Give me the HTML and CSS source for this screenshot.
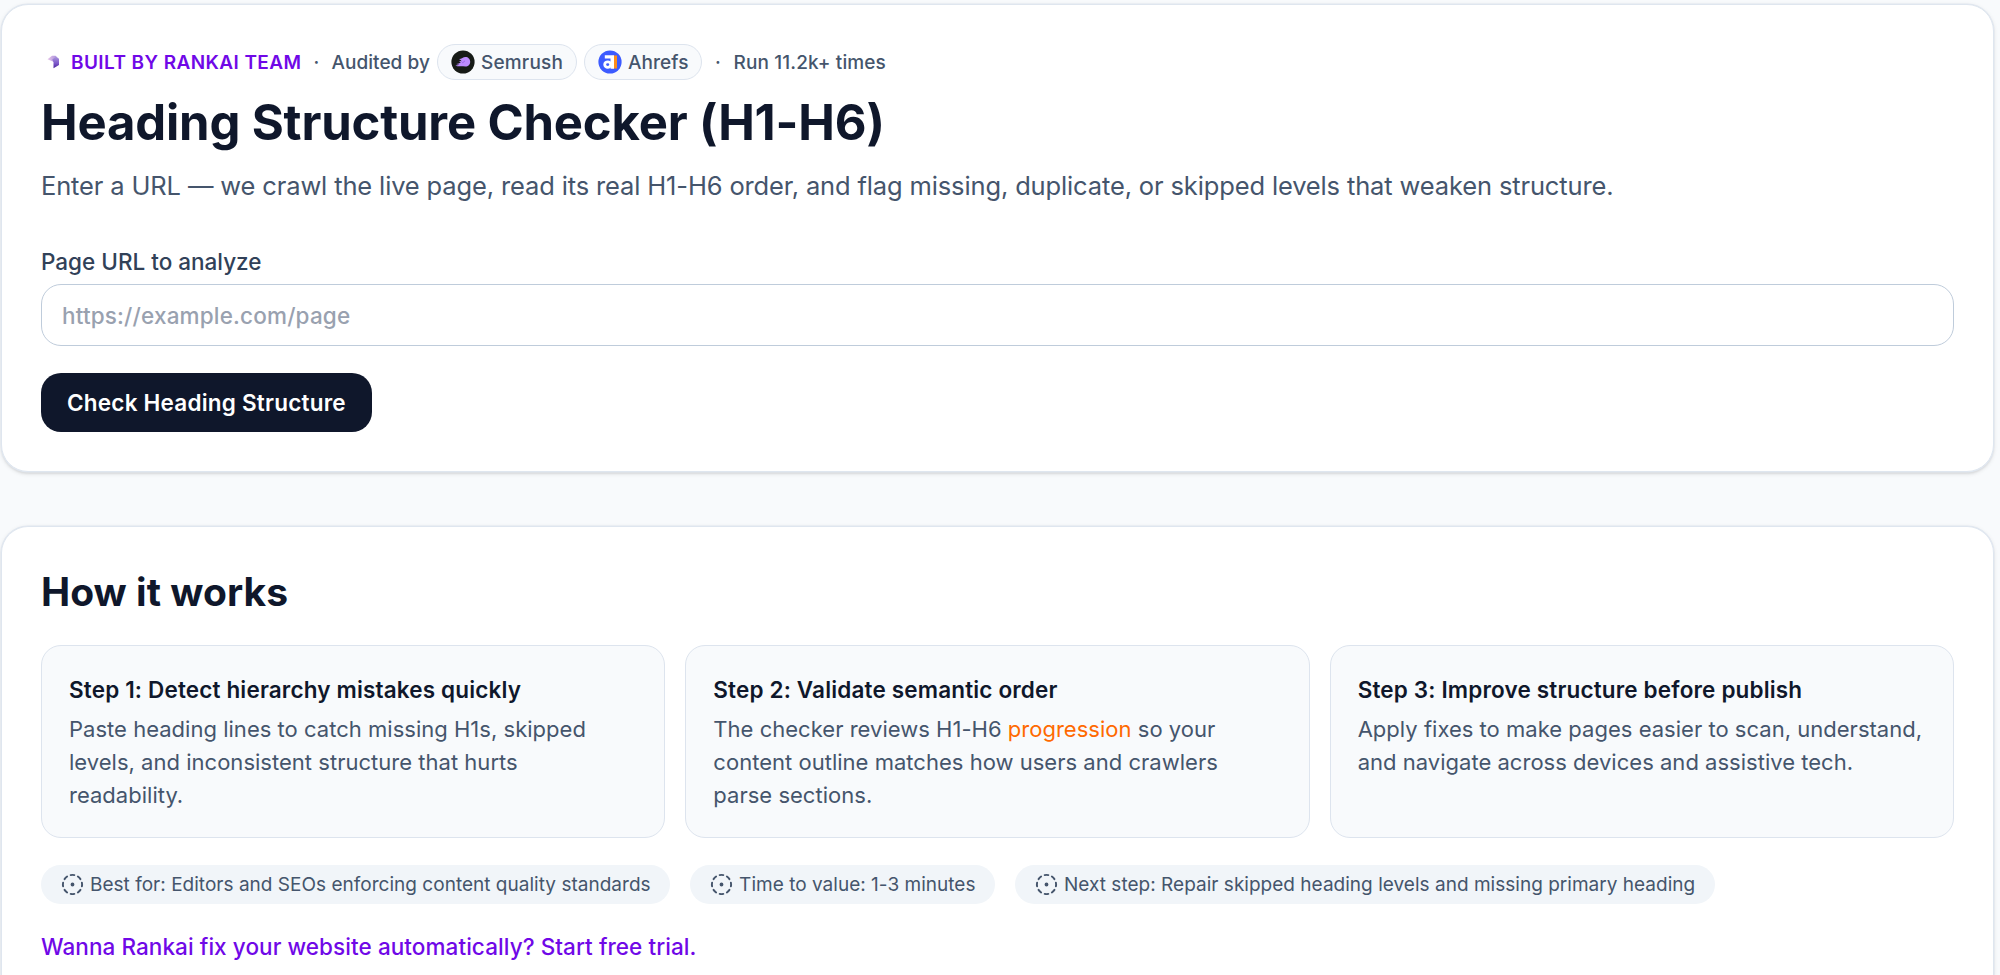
FILE: index.html
```
<!DOCTYPE html>
<html lang="en">
<head>
    <meta charset="UTF-8">
    <meta name="viewport" content="width=device-width, initial-scale=1.0">
    <title>Heading Structure Checker (H1-H6)</title>
    <link rel="stylesheet" href="styles.css">
</head>
<body>
    <svg class="sprite" width="0" height="0">
        <symbol id="circle-dashed" viewBox="0 0 24 24">
            <path d="M10.1 2.18a9.93 9.93 0 0 1 3.8 0"/>
            <path d="M17.6 3.71a9.95 9.95 0 0 1 2.69 2.7"/>
            <path d="M21.82 10.1a9.93 9.93 0 0 1 0 3.8"/>
            <path d="M20.29 17.6a9.95 9.95 0 0 1-2.7 2.69"/>
            <path d="M13.9 21.82a9.94 9.94 0 0 1-3.8 0"/>
            <path d="M6.4 20.29a9.95 9.95 0 0 1-2.69-2.7"/>
            <path d="M2.18 13.9a9.93 9.93 0 0 1 0-3.8"/>
            <path d="M3.71 6.4a9.95 9.95 0 0 1 2.7-2.69"/>
            <circle cx="12" cy="12" r="1"/>
        </symbol>
    </svg>

    <main class="page">
        <section class="card tool">
            <div class="meta">
                <span class="built">
                    <svg class="logo" viewBox="0 0 24 24">
                        <defs>
                            <linearGradient id="logoTop" x1="0" y1="0" x2="1" y2="0">
                                <stop offset="0" stop-color="#e6c4ea"/>
                                <stop offset="1" stop-color="#9d86d8"/>
                            </linearGradient>
                            <linearGradient id="logoSide" x1="0" y1="0" x2="0" y2="1">
                                <stop offset="0" stop-color="#a893dc"/>
                                <stop offset="0.6" stop-color="#7a55c8"/>
                                <stop offset="1" stop-color="#4a2599"/>
                            </linearGradient>
                        </defs>
                        <path fill="url(#logoTop)" d="M5.500 9.200 10 5.800h3.500l3.500 3.200-5 3z"/>
                        <path fill="url(#logoSide)" d="M10.300 9.500 13.500 7l3.500 2v6l-5.500 3.200v-6z"/>
                    </svg>
                    Built by Rankai team
                </span>
                <span class="dot">·</span>
                <span class="audited">Audited by</span>
                <span class="badge">
                    <svg viewBox="0 0 24 24">
                        <circle cx="12" cy="12" r="11.600" fill="#171b17"/>
                        <path fill="#be8cff" d="M19.200 11.700c0 2.700-2 4.800-4.800 4.800-2 0-3.600-.3-5.200-.2-1.800.1-3.300-.1-4.900-.8 1.600-.1 3-.3 4.200-.8-1.200 0-2.300-.1-3.300-.6 1.900-.3 3.300-.9 4.500-1.900-.7-.6-1.300-.9-2.100-1.300 1.200 0 2.200.1 3.100.4-.7-.9-1.600-1.600-2.700-2.200 2.400.2 4.200-2.200 6.400-2.200 2.800 0 4.800 2.100 4.800 4.800z"/>
                        <path d="M11.200 12.800c1.200-.5 2-1.100 2.700-1.900" stroke="#9a63ea" fill="none"/>
                    </svg>
                    Semrush
                </span>
                <span class="badge badge-ahrefs">
                    <svg viewBox="0 0 24 24">
                        <circle cx="12" cy="12" r="11.600" fill="#3c5bff"/>
                        <path d="M14.500 5.500h4.500v13h-4.500z" fill="#ff8c1a"/>
                        <path d="M6.800 5.300h9.200v13.400h-3.500V8.400H6.800z" fill="#fff"/>
                        <ellipse cx="9.700" cy="14.600" rx="3" ry="2.800" fill="none" stroke="#fff" stroke-width="2.800"/>
                    </svg>
                    Ahrefs
                </span>
                <span class="dot dot-last">·</span>
                <span class="runs">Run 11.2k+ times</span>
            </div>

            <h1>Heading Structure Checker (H1-H6)</h1>
            <p class="lead">Enter a URL — we crawl the live page, read its real H1-H6 order, and flag missing, duplicate, or skipped levels that weaken structure.</p>

            <form class="form">
                <label for="url">Page URL to analyze</label>
                <input type="url" id="url" placeholder="https://example.com/page">
                <button type="button">Check Heading Structure</button>
            </form>
        </section>

        <section class="card how">
            <h2>How it works</h2>
            <div class="steps">
                <article class="step">
                    <h3>Step 1: Detect hierarchy mistakes quickly</h3>
                    <p>Paste heading lines to catch missing H1s, skipped levels, and inconsistent structure that hurts readability.</p>
                </article>
                <article class="step">
                    <h3>Step 2: Validate semantic order</h3>
                    <p>The checker reviews H1-H6 <a href="#">progression</a> so your content outline matches how users and crawlers parse sections.</p>
                </article>
                <article class="step">
                    <h3>Step 3: Improve structure before publish</h3>
                    <p>Apply fixes to make pages easier to scan, understand, and navigate across devices and assistive tech.</p>
                </article>
            </div>
            <div class="chips">
                <span class="chip"><svg><use href="#circle-dashed"/></svg>Best for: Editors and SEOs enforcing content quality standards</span>
                <span class="chip"><svg><use href="#circle-dashed"/></svg>Time to value: 1-3 minutes</span>
                <span class="chip"><svg><use href="#circle-dashed"/></svg>Next step: Repair skipped heading levels and missing primary heading</span>
            </div>
            <a class="trial" href="#">Wanna Rankai fix your website automatically? Start free trial.</a>
        </section>
    </main>
</body>
</html>
```
FILE: styles.css
```
* {
    box-sizing: border-box;
}

body {
    font-family: Inter, "Liberation Sans", sans-serif;
    margin: 0;
    background: #f8fafc;
    color: #0f172b;
}

h1, h2, h3, p {
    margin: 0;
}

a {
    text-decoration: none;
}

.sprite {
    position: absolute;
}

.page {
    display: flex;
    flex-direction: column;
    gap: 54px;
    width: 1994px;
    height: 975px;
    padding: 4px 0 0 1px;
}

/* Cards */
.card {
    flex: none;
    background: #fff;
    border: 1px solid #dfe6ef;
    border-radius: 27px;
    padding: 39px;
    box-shadow: 0 0 0 0.5px #e2e8f0, 0 1.5px 4px rgba(0,0,0,0.1), 0 1.5px 2px rgba(0,0,0,0.06);
}

.tool {
    height: 468px;
}

/* runs down to the bottom of the window */
.how {
    flex: 1;
    padding-top: 41px;
    padding-bottom: 0;
    border-bottom: none;
    border-bottom-left-radius: 0;
    border-bottom-right-radius: 0;
}

/* Top line */
.meta {
    display: flex;
    align-items: center;
    height: 36px;
    padding-left: 1px;
    font-size: 19px;
    font-weight: 500;
    color: #45556c;
    letter-spacing: 0.05px;
}

.built {
    display: flex;
    align-items: center;
    gap: 5px;
    color: #7008e7;
    font-weight: 600;
    letter-spacing: 0.41px;
    text-transform: uppercase;
}

.logo {
    width: 24px;
    height: 24px;
}

.dot {
    width: 30px;
    text-align: center;
}

.dot-last {
    width: 31px;
}

.audited {
    margin-right: 7px;
}

.badge {
    display: flex;
    align-items: center;
    gap: 6px;
    height: 36px;
    margin-right: 7px;
    padding: 0 13px;
    border: 1px solid #dde4ee;
    border-radius: 18px;
    background: #f8fafc;
    letter-spacing: 0.2px;
}

.badge svg {
    width: 24px;
    height: 24px;
}

.badge-ahrefs {
    margin-right: 0;
    letter-spacing: 0.05px;
}

.runs {
    letter-spacing: 0.13px;
}

h1 {
    margin-top: 13px;
    font-size: 49px;
    line-height: 60px;
    font-weight: 700;
    letter-spacing: -0.16px;
}

.lead {
    margin-top: 13px;
    font-size: 25.5px;
    line-height: 40px;
    letter-spacing: -0.14px;
    color: #45556c;
    white-space: nowrap;
}

/* Form */
.form {
    display: flex;
    flex-direction: column;
    align-items: flex-start;
    margin-top: 40px;
}

label {
    font-size: 22.5px;
    line-height: 32px;
    font-weight: 500;
    color: #314158;
}

input {
    width: 100%;
    height: 62px;
    margin-top: 6px;
    padding: 0 20px;
    border: 1px solid #bfccdb;
    border-radius: 20px;
    background: #fff;
    font: 500 22.5px Inter, sans-serif;
    letter-spacing: 0.17px;
}

input::placeholder {
    color: #99a1af;
    opacity: 1;
}

button {
    height: 59px;
    margin-top: 26.5px;
    padding: 0 26px;
    border: none;
    border-radius: 20px;
    background: #0f172b;
    color: #fff;
    font: 600 22.5px Inter, sans-serif;
    letter-spacing: 0.22px;
    cursor: pointer;
}

/* How it works */
h2 {
    font-size: 39px;
    line-height: 48px;
    font-weight: 700;
    letter-spacing: 0.05px;
}

.steps {
    display: grid;
    grid-template-columns: repeat(3, 1fr);
    gap: 20px;
    margin-top: 29px;
}

.step {
    height: 193px;
    padding: 28px 30px 0 27px;
    border: 1px solid #dde4ee;
    border-radius: 20px;
    background: #f8fafc;
}

h3 {
    font-size: 22.5px;
    line-height: 32px;
    font-weight: 600;
    letter-spacing: 0.16px;
}

.step p {
    margin-top: 7px;
    font-size: 22px;
    line-height: 33px;
    letter-spacing: 0.02px;
    color: #45556c;
}

.step a {
    color: #ff6900;
}

.chips {
    display: flex;
    gap: 20px;
    margin-top: 27px;
}

.chip {
    display: flex;
    align-items: center;
    gap: 6px;
    height: 39px;
    padding: 0 19.5px 0 20px;
    border-radius: 20px;
    background: #f1f5f9;
    color: #45556c;
    font-size: 19px;
    letter-spacing: 0.02px;
}

.chip svg {
    width: 23px;
    height: 23px;
    fill: none;
    stroke: currentColor;
    stroke-width: 2;
    stroke-linecap: round;
    stroke-linejoin: round;
}

.trial {
    display: block;
    margin-top: 27px;
    font-size: 22.5px;
    line-height: 32px;
    font-weight: 500;
    letter-spacing: 0.07px;
    color: #7008e7;
}
```
